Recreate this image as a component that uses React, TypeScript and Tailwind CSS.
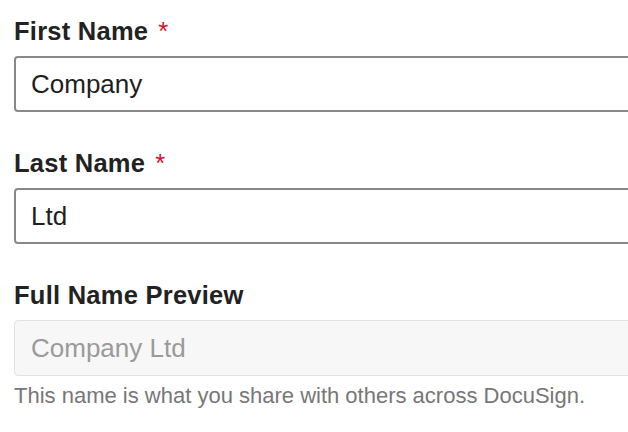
export default function App() {
  return (
    <div className="w-[628px] h-[432px] overflow-hidden bg-white pl-[14px] pt-[16px] font-['Liberation_Sans',Arial,sans-serif]">
      <div className="w-[700px]">
        <label className="block text-[25.5px] leading-[30px] font-bold tracking-[0.25px] text-[#222]">
          First Name<span className="ml-[10px] font-normal text-[#d0112b]">*</span>
        </label>
        <input
          type="text"
          defaultValue="Company"
          className="mt-[10px] block w-full h-[56px] rounded-[4px] border-2 border-[#888] bg-white pl-[15px] text-[26px] text-[#1e1e1e] outline-none"
        />

        <label className="mt-[36px] block text-[25.5px] leading-[30px] font-bold tracking-[0.25px] text-[#222]">
          Last Name<span className="ml-[10px] font-normal text-[#d0112b]">*</span>
        </label>
        <input
          type="text"
          defaultValue="Ltd"
          className="mt-[10px] block w-full h-[56px] rounded-[4px] border-2 border-[#888] bg-white pl-[15px] text-[26px] text-[#1e1e1e] outline-none"
        />

        <label className="mt-[36px] block text-[25.5px] leading-[30px] font-bold tracking-[0.25px] text-[#222]">
          Full Name Preview
        </label>
        <input
          type="text"
          disabled
          value="Company Ltd"
          className="mt-[10px] block w-full h-[56px] rounded-[4px] border border-[#e2e2e2] bg-[#f7f7f7] pl-[16px] text-[26px] text-[#9a9a9a] outline-none"
        />
        <p className="mt-[7px] text-[22px] leading-[26px] text-[#777]">
          This name is what you share with others across DocuSign.
        </p>
      </div>
    </div>
  );
}
